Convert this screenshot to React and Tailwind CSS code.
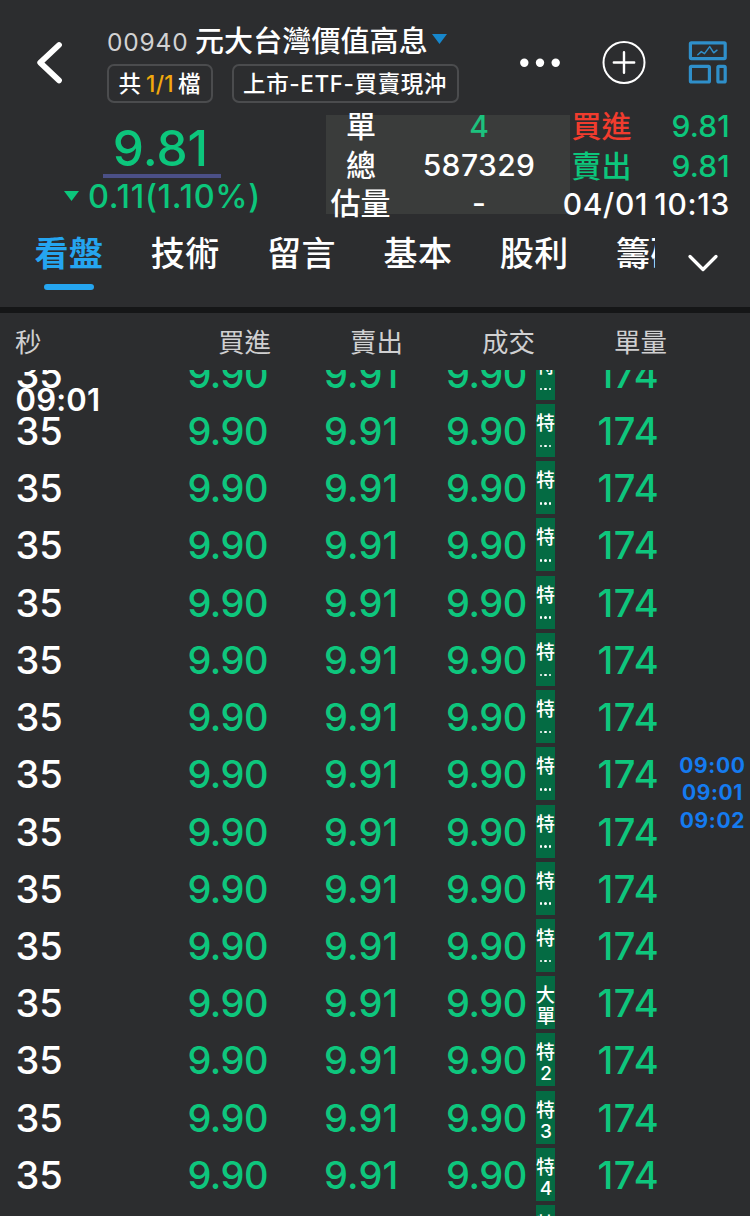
import React from "react";

const rows = ["特…", "特…", "特…", "特…", "特…", "特…", "特…", "特…", "特…", "特…", "特…", "大單", "特2", "特3", "特4", "特5"];
const tabs = ["技術", "留言", "基本", "股利", "籌碼"];

function Tag({ label }) {
  const second = label[1];
  return (
    <div className="ml-[9px] flex h-[53px] w-[19px] flex-col items-center bg-[#046b43] text-[19px] leading-[22px] font-medium text-white">
      <span className="mt-[9px] h-[21px]">{label[0]}</span>
      {second === "…" ? (
        <span className="flex h-[22px] items-center gap-[2px] pt-[2px]">
          <i className="size-[2.6px] rounded-full bg-white" />
          <i className="size-[2.6px] rounded-full bg-white" />
          <i className="size-[2.6px] rounded-full bg-white" />
        </span>
      ) : (
        <span className="h-[22px] pl-px">{second}</span>
      )}
    </div>
  );
}

function Header() {
  return (
    <div className="flex h-[112px] items-start">
      <svg className="mt-[40px] ml-[34px] h-[46px] w-[32px]" viewBox="0 0 32 46" fill="none" stroke="#fff" strokeWidth="5.8" strokeLinecap="round" strokeLinejoin="round">
        <path d="M25 5 6.2 22.6 25 40.4" />
      </svg>
      <div className="mt-[22px] ml-[41px] w-[360px]">
        <div className="flex h-[40px] items-center">
          <span className="w-[88px] pt-px text-[24.5px] tracking-[0.8px] text-[#d2d2d3]">00940</span>
          <span className="w-[236px] text-[29px] font-medium tracking-[0.1px]">元大台灣價值高息</span>
          <svg className="-mt-[6px] ml-[1px] h-[10px] w-[15px]" viewBox="0 0 15 10"><path d="M0 0H15L7.5 10Z" fill="#1787cc" /></svg>
        </div>
        <div className="mt-[2px] flex gap-[19px]">
          <div className="flex h-[39px] w-[106px] items-center justify-center rounded-[7px] border-2 border-[#4b4c4e] pr-px text-[22.5px] font-medium">
            共<span className="mr-[4px] ml-[5px] tracking-[0.4px] text-[#f2a90d]">1/1</span>檔
          </div>
          <div className="flex h-[39px] w-[227px] items-center justify-center rounded-[7px] border-2 border-[#4b4c4e] pr-px text-[22.5px] font-medium tracking-[0.6px]">
            上市-ETF-買賣現沖
          </div>
        </div>
      </div>
      <svg className="mt-[57px] ml-[53px] h-[12px] w-[40px]" viewBox="0 0 40 12" fill="#fff">
        <circle cx="4.3" cy="5.7" r="4.2" /><circle cx="20" cy="5.7" r="4.2" /><circle cx="35.7" cy="5.7" r="4.2" />
      </svg>
      <svg className="mt-[40px] ml-[42px] h-[44px] w-[44px]" viewBox="0 0 44 44" fill="none" stroke="#fff" strokeWidth="2" strokeLinecap="round">
        <circle cx="22" cy="22.5" r="20.5" /><path d="M22 12.3V32.7M11.8 22.5H32.2" strokeWidth="2.4" />
      </svg>
      <svg className="mt-[40px] ml-[42px] h-[44px] w-[40px]" viewBox="0 0 40 44" fill="none" stroke="#2f8fca" strokeWidth="3.2" strokeLinejoin="round">
        <rect x="2.4" y="2.8" width="34.8" height="15.8" rx="1" />
        <rect x="2.4" y="26.4" width="19" height="15.6" rx="1" />
        <rect x="29.9" y="26.4" width="7.3" height="15.6" rx="1" />
        <path d="m9.8 14.8 3.5-3.2 3.2 2 5.2-7 4 6.2 3.3-2.6" strokeWidth="1.5" strokeLinecap="round" />
      </svg>
    </div>
  );
}

function Quote() {
  return (
    <div className="flex h-[114px] text-[30px] font-medium">
      <div className="w-[326px] text-[#0cc67c]">
        <div className="mt-[12px] ml-[103px] flex h-[54px] w-[118px] items-center justify-center border-b-4 border-[#4b5087] pr-[3px] pb-px text-[49.5px]">9.81</div>
        <div className="flex h-[36px] items-center pl-[64px]">
          <svg className="mr-[9px] h-[10px] w-[15px]" viewBox="0 0 15 10"><path d="M0 0H15L7.5 10Z" fill="#0cc67c" /></svg>
          <span className="pt-[2px] text-[32.5px] tracking-[0.7px]">0.11(1.10%)</span>
        </div>
      </div>
      <div className="mt-[3px] h-[99px] w-[244px] bg-[#3a3c3b]">
        <div className="-mt-[8px] flex h-[38.5px] items-center leading-[38px]">
          <span className="w-[70px] text-center">單</span>
          <span className="w-[166px] text-center text-[#1cc27e]">4</span>
        </div>
        <div className="flex h-[38.5px] items-center leading-[38px]">
          <span className="w-[70px] text-center">總</span>
          <span className="w-[166px] text-center tracking-[0.4px]">587329</span>
        </div>
        <div className="flex h-[38.5px] items-center leading-[38px]">
          <span className="w-[69px] text-center whitespace-nowrap">估量</span>
          <span className="w-[168px] text-center">-</span>
        </div>
      </div>
      <div className="-mt-[6px] w-[160px] leading-[40px]">
        <div className="flex h-[40px] items-center justify-between pl-[1.5px]"><span className="text-[#f13c2e]">買進</span><span className="tracking-[0.2px] text-[#0cc67c]">9.81</span></div>
        <div className="flex h-[40px] items-center justify-between pl-[1.5px]"><span className="text-[#0cc67c]">賣出</span><span className="tracking-[0.2px] text-[#0cc67c]">9.81</span></div>
        <div className="-ml-[10px] flex h-[36px] items-center justify-end tracking-[0.7px] whitespace-nowrap [word-spacing:-2.5px]">04/01 10:13</div>
      </div>
    </div>
  );
}

function Tabs() {
  return (
    <div className="flex h-[81px] pl-[34.5px] text-[34px] font-medium tracking-[0.5px]">
      <div className="flex w-[620.5px] gap-[47.3px] overflow-hidden">
        <div className="flex w-[69px] shrink-0 flex-col items-center text-[#25a5f0]">
          <span className="h-[56px] leading-[56px] font-bold">看盤</span>
          <span className="mt-[2px] h-[6px] w-[50px] rounded-full bg-[#25a5f0]" />
        </div>
        {tabs.map((t) => <span key={t} className="w-[69px] shrink-0 leading-[56px]">{t}</span>)}
      </div>
      <svg className="mt-[26px] ml-[30.5px] h-[22px] w-[34px]" viewBox="0 0 34 22" fill="none" stroke="#fff" strokeWidth="3.3" strokeLinecap="round" strokeLinejoin="round"><path d="M4 4.5 17 17.5 30 4.5" /></svg>
    </div>
  );
}

export default function App() {
  return (
    <div className="relative flex h-[1216px] w-[750px] flex-col overflow-hidden bg-[#2c2d2f] font-['Inter','Noto_Sans_CJK_TC',sans-serif] whitespace-nowrap text-white">
      <Header />
      <Quote />
      <Tabs />
      <div className="h-[6px] shrink-0 bg-[#151617]" />
      <div className="flex h-[57px] shrink-0 items-center pt-[3px] text-[26.5px] text-[#d0d0d1]">
        <span className="w-[72px] pl-[15px]">秒</span>
        <span className="w-[199px] text-right">買進</span>
        <span className="w-[132px] text-right">賣出</span>
        <span className="w-[132px] text-right">成交</span>
        <span className="w-[132px] text-right">單量</span>
      </div>
      <div className="min-h-0 flex-1 overflow-hidden">
        <div className="-mt-[25.3px]">
          {rows.map((r, i) => (
            <div key={i} className="flex h-[57.23px] items-center text-[38px] leading-[57px] font-medium text-[#0ec67d]">
              <span className="w-[72px] pt-[2px] pl-[15.5px] text-white">35</span>
              <span className="w-[196px] pt-[2px] text-right tracking-[-0.5px]">9.90</span>
              <span className="w-[130.5px] pt-[2px] text-right tracking-[0.2px]">9.91</span>
              <span className="w-[128.5px] pt-[2px] text-right tracking-[-0.4px]">9.90</span>
              <Tag label={r} />
              <span className="w-[104px] pt-[2px] text-right tracking-[0.4px]">174</span>
            </div>
          ))}
        </div>
      </div>
      <div className="absolute top-[380.5px] left-[15.5px] text-[31px] leading-[38px] font-semibold tracking-[0.2px]">09:01</div>
      <div className="absolute top-[752px] right-[4.5px] flex flex-col items-center text-[21px] leading-[27.4px] font-bold tracking-[0.6px] text-[#157bf0]">
        <span>09:00</span><span>09:01</span><span>09:02</span>
      </div>
    </div>
  );
}
